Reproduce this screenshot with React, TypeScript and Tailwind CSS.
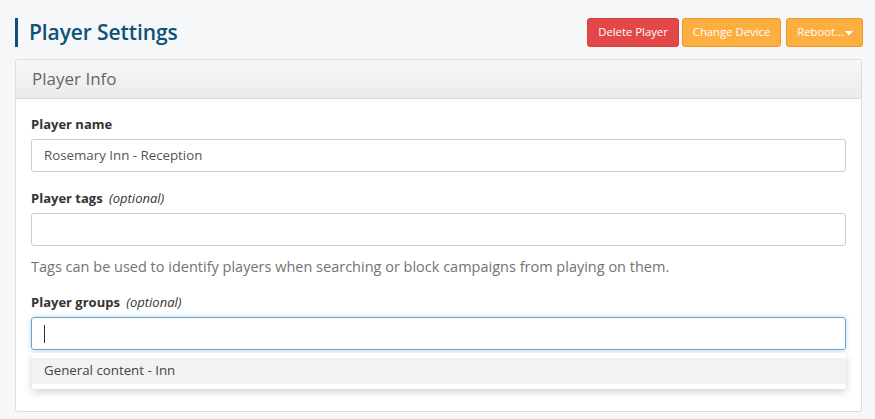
import React from "react";

export default function App() {
  const font = { fontFamily: '"Open Sans", "Noto Sans", sans-serif' };
  return (
    <div className="min-h-[419px] w-full bg-[#f6f7f9] pl-[15px] pr-[12px] pt-[18px] text-[#333]" style={font}>
      <div className="flex h-[29px] items-center justify-between">
        <div className="flex h-[29px] items-center border-l-[3px] border-[#0f5279] pl-[11px]">
          <h1 className="text-[21px] font-semibold leading-none tracking-[-0.1px] text-[#0f5279]">Player Settings</h1>
        </div>
        <div className="flex h-[29px] items-stretch gap-[3px]">
          <button className="rounded-[3px] border border-[#d43f3f] bg-[#e34848] px-[10px] text-[11.3px] text-white">Delete Player</button>
          <button className="rounded-[3px] border border-[#e89a2e] bg-[#fdae40] px-[10px] text-[11.3px] text-white">Change Device</button>
          <button className="ml-[2px] flex items-center rounded-[3px] border border-[#e89a2e] bg-[#fdae40] pl-[10px] pr-[9px] text-[11.3px] text-white">
            Reboot...
            <svg width="8" height="5" viewBox="0 0 8 5" className="ml-[1px] mt-[2px]"><path d="M0 0h8L4 4.5z" fill="white" /></svg>
          </button>
        </div>
      </div>
      <div className="mt-[12px] h-[353px] w-[847px] rounded-[3px] border border-[#dddddd] bg-white">
        <div className="flex h-[39px] items-center border-b border-[#dcdcdc] bg-gradient-to-b from-[#f7f7f7] to-[#ebebeb] px-[16px] text-[17px] text-[#666]">
          Player Info
        </div>
        <div className="px-[15px] pt-[16px]">
          <label className="block text-[13px] font-bold leading-[18px] text-[#333]">Player name</label>
          <div className="mt-[6px] flex h-[33px] items-center rounded-[3px] border border-[#cccccc] px-[12px] text-[13.3px] text-[#555]">
            Rosemary Inn - Reception
          </div>
          <label className="mt-[17px] block text-[13px] font-bold leading-[18px] text-[#333]">
            Player tags <span className="ml-[3px] font-normal italic">(optional)</span>
          </label>
          <div className="mt-[6px] h-[33px] rounded-[3px] border border-[#cccccc]" />
          <p className="mt-[12px] text-[14.5px] leading-[18px] text-[#737373]">
            Tags can be used to identify players when searching or block campaigns from playing on them.
          </p>
          <label className="mt-[17px] block text-[13px] font-bold leading-[18px] text-[#333]">
            Player groups <span className="ml-[3px] font-normal italic">(optional)</span>
          </label>
          <div className="relative mt-[6px]">
            <div className="flex h-[33px] items-center rounded-[3px] border border-[#66a3d6] px-[12px] shadow-[0_0_5px_rgba(102,163,214,0.45)]">
              <span className="h-[18px] w-px bg-[#333]" />
            </div>
            <div className="absolute left-[1px] right-0 top-[36px] rounded-[3px] bg-white py-[5px] shadow-[0_3px_8px_rgba(0,0,0,0.18)]">
              <div className="flex h-[26px] items-center bg-[#f2f2f2] px-[12px] text-[13.3px] text-[#444]">General content - Inn</div>
            </div>
          </div>
        </div>
      </div>
    </div>
  );
}
